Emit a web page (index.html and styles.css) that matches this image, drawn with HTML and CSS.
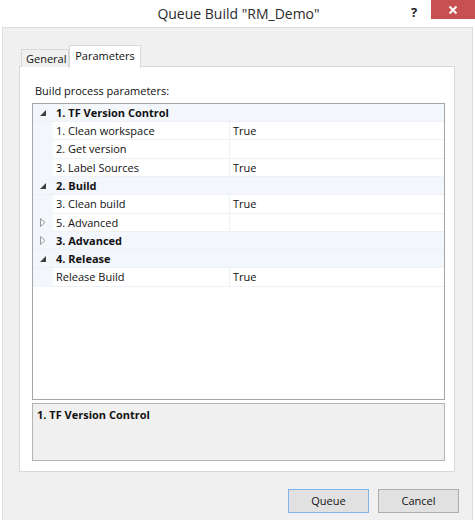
FILE: index.html
```html
<!DOCTYPE html>
<html>
<head>
<meta charset="utf-8">
<link rel="stylesheet" href="styles.css">
</head>
<body>
<div class="window">
  <div class="titlebar">
    <div class="title">Queue Build "RM_Demo"</div>
    <div class="help">?</div>
    <div class="close">
      <svg width="10" height="10" viewBox="0 0 10 10"><path d="M1.5 1.5 L8.5 8.5 M8.5 1.5 L1.5 8.5" stroke="#fff" stroke-width="2"/></svg>
    </div>
  </div>
  <div class="client">
    <div class="tabs">
      <div class="tab">General</div>
      <div class="tab active">Parameters</div>
    </div>
    <div class="tabpage">
      <div class="caption">Build process parameters:</div>
      <div class="grid">
        <div class="row cat">
          <div class="gutter"><svg class="exp" width="6" height="6" viewBox="0 0 6 6"><path d="M6 0 L6 6 L0 6 Z" fill="#404040"/></svg></div>
          <div class="catname">1. TF Version Control</div>
        </div>
        <div class="row prop">
          <div class="gutter"></div>
          <div class="name">1. Clean workspace</div>
          <div class="value">True</div>
        </div>
        <div class="row prop">
          <div class="gutter"></div>
          <div class="name">2. Get version</div>
          <div class="value"></div>
        </div>
        <div class="row prop">
          <div class="gutter"></div>
          <div class="name">3. Label Sources</div>
          <div class="value">True</div>
        </div>
        <div class="row cat">
          <div class="gutter"><svg class="exp" width="6" height="6" viewBox="0 0 6 6"><path d="M6 0 L6 6 L0 6 Z" fill="#404040"/></svg></div>
          <div class="catname">2. Build</div>
        </div>
        <div class="row prop">
          <div class="gutter"></div>
          <div class="name">3. Clean build</div>
          <div class="value">True</div>
        </div>
        <div class="row prop">
          <div class="gutter"><svg class="col" width="6" height="9" viewBox="0 0 6 9"><path d="M0.5 0.5 L5 4.5 L0.5 8.5 Z" fill="none" stroke="#9a9a9a" stroke-width="1"/></svg></div>
          <div class="name">5. Advanced</div>
          <div class="value"></div>
        </div>
        <div class="row cat">
          <div class="gutter"><svg class="col" width="6" height="9" viewBox="0 0 6 9"><path d="M0.5 0.5 L5 4.5 L0.5 8.5 Z" fill="none" stroke="#9a9a9a" stroke-width="1"/></svg></div>
          <div class="catname">3. Advanced</div>
        </div>
        <div class="row cat">
          <div class="gutter"><svg class="exp" width="6" height="6" viewBox="0 0 6 6"><path d="M6 0 L6 6 L0 6 Z" fill="#404040"/></svg></div>
          <div class="catname">4. Release</div>
        </div>
        <div class="row prop">
          <div class="gutter"></div>
          <div class="name">Release Build</div>
          <div class="value">True</div>
        </div>
      </div>
      <div class="desc">1. TF Version Control</div>
    </div>
    <div class="buttons">
      <div class="btn default">Queue</div>
      <div class="btn">Cancel</div>
    </div>
  </div>
</div>
</body>
</html>
```
FILE: styles.css
```css
* { box-sizing: border-box; }
html, body { margin: 0; padding: 0; }
body {
  width: 475px;
  height: 520px;
  background: #ffffff;
  font-family: "Open Sans", "Noto Sans", sans-serif;
  font-size: 11px;
  color: #111111;
  overflow: hidden;
}
.window {
  width: 475px;
  height: 520px;
  display: flex;
  flex-direction: column;
}
.titlebar {
  height: 27px;
  position: relative;
  display: flex;
  justify-content: center;
}
.title {
  font-size: 14px;
  color: #2b2b2b;
  line-height: 27px;
  padding-left: 2px;
}
.help {
  position: absolute;
  left: 411px;
  top: 3px;
  font-weight: bold;
  font-size: 13px;
  color: #222;
}
.close {
  position: absolute;
  right: 0;
  top: 0;
  width: 44px;
  height: 19px;
  background: #c75050;
  display: flex;
  align-items: center;
  justify-content: center;
}
.client {
  flex: 1;
  margin: 0 2px;
  border: 1px solid #dcdcdc;
  border-bottom: none;
  background: #f0f0f0;
  padding: 17px 0 0 16px;
  display: flex;
  flex-direction: column;
}
.tabs {
  display: flex;
  align-items: flex-end;
  padding-left: 2px;
  height: 22px;
  position: relative;
  z-index: 2;
}
.tab {
  height: 18px;
  padding: 0 4px;
  border: 1px solid #d9d9d9;
  border-bottom: none;
  background: #f0f0f0;
  line-height: 17px;
  font-size: 11px;
  width: 48px;
  text-align: center;
}
.tab.active {
  width: 72px;
  background: #ffffff;
  line-height: 19px;
  margin-bottom: -1px;
  height: 23px;
}
.tabpage {
  width: 436px;
  height: 406px;
  background: #ffffff;
  border: 1px solid #d9d9d9;
  margin-top: -1px;
  padding: 0 9px 10px 12px;
  display: flex;
  flex-direction: column;
}
.caption {
  height: 36px;
  padding-top: 16px;
  padding-left: 3px;
  line-height: 16px;
}
.grid {
  height: 298px;
  border: 1px solid #a6a6a6;
  background: #ffffff;
}
.row {
  height: 18.27px;
  display: flex;
  align-items: stretch;
}
.gutter {
  width: 20px;
  background: #f3f6fb;
  display: flex;
  align-items: center;
  justify-content: flex-end;
  padding-right: 7px;
}
.cat { background: #f3f6fb; border-bottom: 1px solid #edf1f7; }
.catname {
  font-weight: bold;
  padding-left: 3px;
  line-height: 17px;
}
.prop .name {
  width: 177px;
  padding-left: 3px;
  line-height: 17px;
  border-right: 1px solid #eef1f6;
  border-bottom: 1px solid #eef1f6;
}
.prop .value {
  flex: 1;
  padding-left: 3px;
  line-height: 17px;
  border-bottom: 1px solid #eef1f6;
}
.desc {
  margin-top: 3px;
  height: 58px;
  background: #f0f0f0;
  border: 1px solid #b4b4b4;
  font-weight: bold;
  padding: 4px 4px;
  line-height: 14px;
}
.buttons {
  display: flex;
  justify-content: flex-end;
  gap: 9px;
  padding-right: 13px;
  margin-top: 17px;
}
.btn {
  width: 81px;
  height: 24px;
  background: #e1e1e1;
  border: 1px solid #adadad;
  text-align: center;
  line-height: 22px;
  font-size: 11px;
}
.btn.default {
  border-color: #7eb4ea;
}
```
